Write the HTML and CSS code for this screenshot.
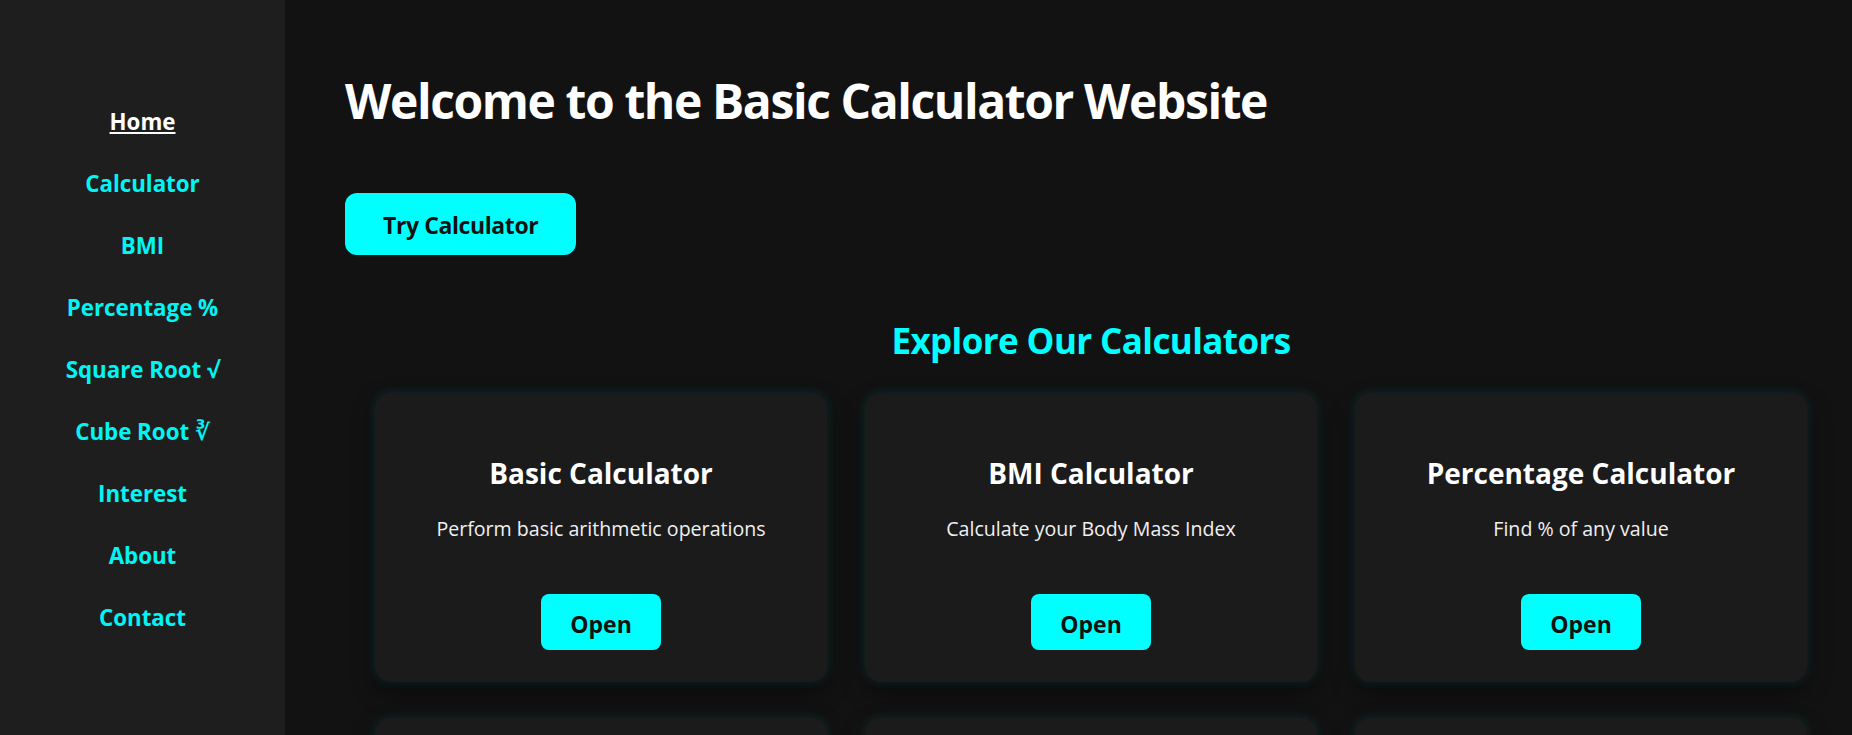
FILE: index.html
```html
<!DOCTYPE html>
<html lang="en">
<head>
<meta charset="utf-8">
<title>Basic Calculator Website</title>
<link rel="stylesheet" href="styles.css">
</head>
<body>
<aside class="sidebar">
  <nav class="nav">
    <a class="nav-link active" href="#">Home</a>
    <a class="nav-link" href="#">Calculator</a>
    <a class="nav-link" href="#">BMI</a>
    <a class="nav-link" href="#">Percentage %</a>
    <a class="nav-link" href="#">Square Root √</a>
    <a class="nav-link" href="#">Cube Root ∛</a>
    <a class="nav-link" href="#">Interest</a>
    <a class="nav-link" href="#">About</a>
    <a class="nav-link" href="#">Contact</a>
  </nav>
</aside>
<main class="content">
  <h1 class="title">Welcome to the Basic Calculator Website</h1>
  <a class="btn-primary" href="#">Try Calculator</a>
  <section class="explore">
    <h2 class="explore-title">Explore Our Calculators</h2>
    <div class="cards">
      <div class="card">
        <h3 class="card-title">Basic Calculator</h3>
        <p class="card-desc">Perform basic arithmetic operations</p>
        <a class="btn-open" href="#">Open</a>
      </div>
      <div class="card">
        <h3 class="card-title">BMI Calculator</h3>
        <p class="card-desc">Calculate your Body Mass Index</p>
        <a class="btn-open" href="#">Open</a>
      </div>
      <div class="card">
        <h3 class="card-title">Percentage Calculator</h3>
        <p class="card-desc">Find % of any value</p>
        <a class="btn-open" href="#">Open</a>
      </div>
      <div class="card">
        <h3 class="card-title">Square Root Calculator</h3>
        <p class="card-desc">Find the square root of any number</p>
        <a class="btn-open" href="#">Open</a>
      </div>
      <div class="card">
        <h3 class="card-title">Cube Root Calculator</h3>
        <p class="card-desc">Find the cube root of any number</p>
        <a class="btn-open" href="#">Open</a>
      </div>
      <div class="card">
        <h3 class="card-title">Interest Calculator</h3>
        <p class="card-desc">Calculate simple interest</p>
        <a class="btn-open" href="#">Open</a>
      </div>
    </div>
  </section>
</main>
</body>
</html>
```
FILE: styles.css
```css
* { box-sizing: border-box; }
html, body { height: 100%; }
body {
  margin: 0;
  display: flex;
  height: 735px;
  overflow: hidden;
  background: #121212;
  color: #fff;
  font-family: "Open Sans", "DejaVu Sans", sans-serif;
}
.sidebar {
  flex: 0 0 285px;
  background: #1e1e1e;
  height: 100%;
}
.nav {
  display: flex;
  flex-direction: column;
  align-items: center;
  gap: 35.2px;
  padding-top: 109px;
}
.nav-link {
  font-size: 22.3px;
  line-height: 1.2;
  font-weight: 700;
  color: #00f5f5;
  text-decoration: none;
}
.nav-link.active {
  color: #fff;
  text-decoration: underline;
}
.content {
  flex: 1;
  padding: 72px 0 0 60px;
}
.title {
  margin: 0;
  font-size: 48px;
  line-height: 1.2;
  font-weight: 700;
  letter-spacing: -1.4px;
}
.btn-primary {
  display: inline-block;
  margin-top: 63px;
  height: 62px;
  line-height: 64px;
  padding: 0 38px;
  border-radius: 12px;
  background: #00ffff;
  color: #111;
  font-size: 23px;
  font-weight: 700;
  letter-spacing: -0.4px;
  text-decoration: none;
  vertical-align: top;
}
.explore {
  width: 1432px;
  margin: 65px 0 0 30px;
}
.explore-title {
  margin: 0 0 31px;
  text-align: center;
  color: #00ffff;
  font-size: 35px;
  line-height: 1.2;
  font-weight: 700;
  letter-spacing: -0.6px;
}
.cards {
  display: grid;
  grid-template-columns: repeat(3, 452px);
  column-gap: 38px;
  row-gap: 36px;
}
.card {
  height: 289px;
  background: #1b1b1b;
  border-radius: 16px;
  padding: 64px 20px 31px;
  text-align: center;
  box-shadow: 0 0 12px rgba(0, 255, 255, 0.12), 0 10px 24px rgba(0, 0, 0, 0.45);
}
.card-title {
  margin: 0;
  font-size: 28px;
  line-height: 1.2;
  font-weight: 700;
}
.card-desc {
  margin: 26.4px 0 0;
  font-size: 19.6px;
  line-height: 1.2;
  color: #f0f0f0;
}
.btn-open {
  display: inline-block;
  margin-top: 53.6px;
  width: 120px;
  height: 56px;
  line-height: 60px;
  border-radius: 8px;
  background: #00ffff;
  color: #111;
  font-size: 23px;
  font-weight: 700;
  text-decoration: none;
  vertical-align: top;
}
```
